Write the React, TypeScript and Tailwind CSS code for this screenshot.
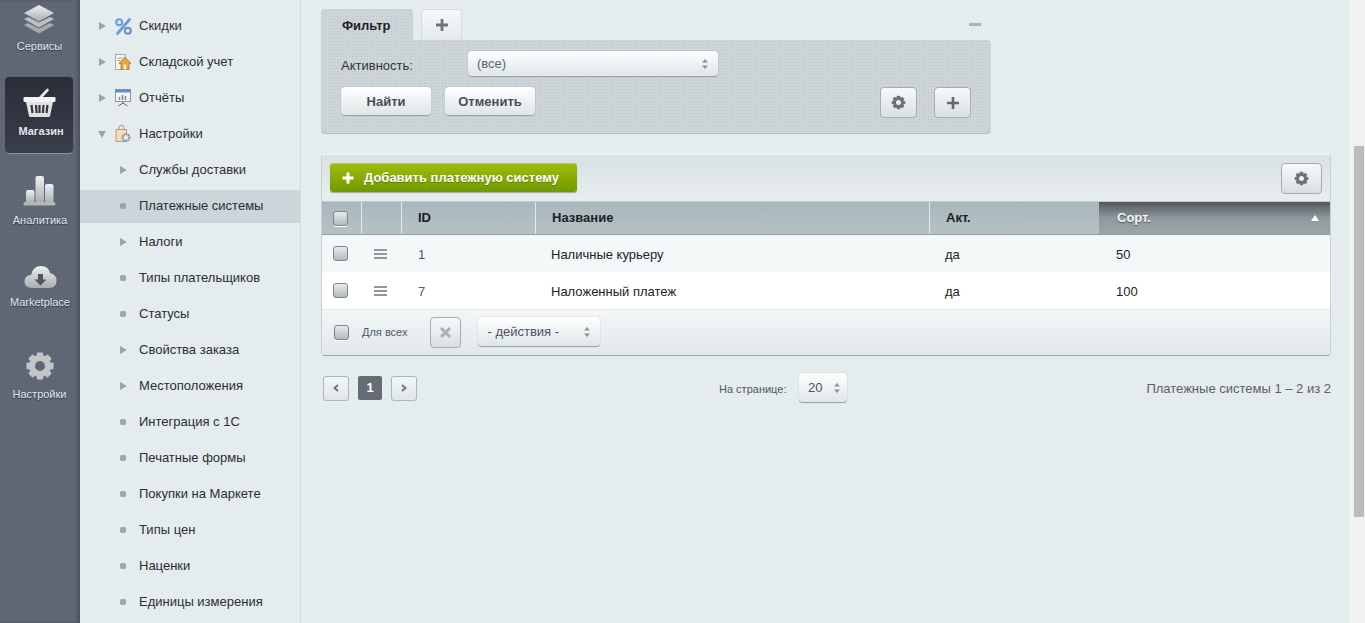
import React from 'react';

const Gear: React.FC<{ size: number; ring?: number; fill: string; className?: string }> = ({ size, ring = 4.6, fill, className }) => (
  <svg width={size} height={size} viewBox="0 0 32 32" className={className}>
    {[0, 45, 90, 135, 180, 225, 270, 315].map((a) => (
      <rect key={a} x="12.6" y="1.5" width="6.8" height="8" rx="1" fill={fill} transform={`rotate(${a} 16 16)`} />
    ))}
    <circle cx="16" cy="16" r="8.6" fill="none" stroke={fill} strokeWidth={ring * 1.4} />
  </svg>
);

const Defs = () => (
  <svg width="0" height="0" className="absolute">
    <defs>
      <linearGradient id="railg" x1="0" y1="0" x2="0" y2="1">
        <stop offset="0" stopColor="#eef0f1" />
        <stop offset="1" stopColor="#a9adb1" />
      </linearGradient>
    </defs>
  </svg>
);

const LayersIcon = () => (
  <svg width="32" height="29" viewBox="0 0 32 29">
    <path d="M1 20 L5 18 L16 23.5 L27 18 L31 20 L16 28.5Z" fill="#a6aaae" />
    <path d="M1 14 L5 12 L16 17.5 L27 12 L31 14 L16 22.5Z" fill="#bcc0c3" />
    <path d="M16 0 L31 8 L16 16.5 L1 8Z" fill="url(#railg)" />
  </svg>
);

const BasketIcon = () => (
  <svg width="33" height="29" viewBox="0 0 33 29">
    <path d="M17 10 L24.5 2" stroke="#e8e8e8" strokeWidth="2.6" strokeLinecap="round" />
    <rect x="0.5" y="9" width="32" height="5" rx="1" fill="#f2f2f2" />
    <path d="M3 14 H30 L27 28 Q26.8 29 25.5 29 H7.5 Q6.2 29 6 28Z" fill="#e0e2e3" />
    <path d="M8.5 17 L9.5 25 M13 17 L13.6 25 M16.5 17 V25 M20.5 17 L19.9 25 M24.5 17 L23.5 25" stroke="#33363f" strokeWidth="2.2" />
  </svg>
);

const BarsIcon = () => (
  <svg width="33" height="31" viewBox="0 0 33 31">
    <rect x="3" y="15" width="8.5" height="13" rx="2" fill="url(#railg)" />
    <rect x="12.5" y="1" width="8.5" height="27" rx="2" fill="url(#railg)" />
    <rect x="22" y="9" width="8.5" height="19" rx="2" fill="url(#railg)" />
    <rect x="0.5" y="27" width="32" height="3.5" rx="1.5" fill="#b5b8bb" />
  </svg>
);

const CloudIcon = () => (
  <svg width="33" height="24" viewBox="0 0 33 24">
    <path d="M8 23 Q0.5 23 0.5 16.5 Q0.5 10.5 7 10 Q9 1 17 1 Q24.5 1 26 8 Q32.5 9.5 32.5 15.5 Q32.5 23 25 23Z" fill="url(#railg)" />
    <path d="M14 9 H19 V14.5 H22.5 L16.5 20.5 L10.5 14.5 H14Z" fill="#51565f" />
  </svg>
);

const PercentIcon = () => (
  <svg width="17" height="17" viewBox="0 0 17 17">
    <path d="M14.5 1.5 L2.5 15.5" stroke="#6f9bd6" strokeWidth="2.8" strokeLinecap="round" />
    <circle cx="4.2" cy="4.2" r="3" fill="#dbe6f3" stroke="#6f9bd6" strokeWidth="2" />
    <circle cx="12.8" cy="12.8" r="3" fill="#dbe6f3" stroke="#6090cc" strokeWidth="2" />
  </svg>
);

const HouseIcon = () => (
  <svg width="16" height="16" viewBox="0 0 16 16">
    <rect x="0.5" y="0.5" width="10" height="15" fill="#f6f6f4" stroke="#a9a9a5" />
    <path d="M2.5 4 H7 M2.5 6.5 H5" stroke="#9d9d9a" />
    <path d="M4 9.5 L9.8 3 L16 9.5 H14 V15.5 H6 V9.5Z" fill="#e8a53a" stroke="#b26f16" strokeWidth="0.8" />
    <rect x="8.6" y="10.5" width="2.6" height="5" fill="#fff3d6" />
  </svg>
);

const ChartIcon = () => (
  <svg width="16" height="18" viewBox="0 0 16 18">
    <rect x="0.5" y="0.5" width="15" height="12" fill="#f5f5f5" stroke="#8d959e" />
    <rect x="0.5" y="0.5" width="15" height="3" fill="#5f8fd0" />
    <path d="M4.5 11 V8 M7.5 11 V6 M10.5 11 V7" stroke="#7d848b" strokeWidth="1.5" />
    <path d="M8 13 V15 M8 14 L3.5 17 M8 14 L12.5 17" stroke="#666" />
  </svg>
);

const BagIcon = () => (
  <svg width="16" height="18" viewBox="0 0 16 18">
    <path d="M4 5 V2.5 Q4 0.5 6.5 0.5 Q9 0.5 9 2.5 V5" fill="none" stroke="#b49060" />
    <path d="M1 4.5 H11.5 V16.5 H1Z" fill="#f5dcb6" stroke="#c09c6c" />
    <circle cx="11" cy="12.5" r="3.4" fill="#e4e6e8" stroke="#8a8f94" strokeWidth="2" strokeDasharray="1.6 0.6" />
    <circle cx="11" cy="12.5" r="1.2" fill="#f2f2f2" />
  </svg>
);

const Arrow: React.FC<{ open?: boolean }> = ({ open }) =>
  open ? (
    <span className="block w-0 h-0 border-l-[4.5px] border-r-[4.5px] border-t-[7px] border-l-transparent border-r-transparent border-t-[#9aa4ac] -ml-px" />
  ) : (
    <span className="block w-0 h-0 border-t-[4.5px] border-b-[4.5px] border-l-[7px] border-t-transparent border-b-transparent border-l-[#9aa4ac]" />
  );

const topItems = [
  { label: 'Скидки', icon: <PercentIcon /> },
  { label: 'Складской учет', icon: <HouseIcon /> },
  { label: 'Отчёты', icon: <ChartIcon /> },
  { label: 'Настройки', icon: <BagIcon />, open: true },
];

const subItems = [
  { label: 'Службы доставки', arrow: true },
  { label: 'Платежные системы', active: true },
  { label: 'Налоги', arrow: true },
  { label: 'Типы плательщиков' },
  { label: 'Статусы' },
  { label: 'Свойства заказа', arrow: true },
  { label: 'Местоположения', arrow: true },
  { label: 'Интеграция с 1С' },
  { label: 'Печатные формы' },
  { label: 'Покупки на Маркете' },
  { label: 'Типы цен' },
  { label: 'Наценки' },
  { label: 'Единицы измерения' },
];

const railLabel = 'text-[11px] leading-[14px] text-[#e4e9ee] [text-shadow:0_1px_1px_#2c303a]';
const whiteBtn =
  'bg-gradient-to-b from-white to-[#dfe6e8] rounded-[4px] border-b border-[#9ba5a9] shadow-[0_0_1px_rgba(80,90,95,0.55)]';
const outlineBtn =
  'bg-gradient-to-b from-[#f7f9f9] to-[#d9e0e2] rounded-[4px] border border-[#a4adb1] flex items-center justify-center';

const Check: React.FC = () => (
  <span className="block w-[15px] h-[15px] rounded-[3px] border border-[#7d868b] bg-gradient-to-b from-[#e9ebec] to-[#b4b9bc] shadow-[0_1px_0_#fff]" />
);

const Updown = () => (
  <svg width="6" height="10" viewBox="0 0 6 10">
    <path d="M3 0 L6 3.5 H0Z M3 10 L6 6.5 H0Z" fill="#8b9397" />
  </svg>
);

const GRID = 'grid grid-cols-[40px_40px_134px_394px_169px_1fr]';

const App: React.FC = () => (
  <div className="flex w-[1365px] h-[623px] overflow-hidden font-['Liberation_Sans',Arial,sans-serif] text-[13px] text-[#2a2e35]">
    <Defs />
    {/* left rail */}
    <aside className="w-[80px] shrink-0 flex flex-col items-center bg-[#606775] bg-[radial-gradient(#585f6c_1px,transparent_1px)] bg-[size:3px_3px] shadow-[inset_-3px_0_3px_rgba(0,0,0,0.18)]">
      <div className="h-[77px] w-full flex flex-col items-center pt-[5px] pr-[2px]">
        <LayersIcon />
        <span className={`${railLabel} mt-[5px] pl-[1px]`}>Сервисы</span>
      </div>
      <div className="w-[68px] h-[77px] mr-[2px] shrink-0 rounded-[4px] bg-gradient-to-b from-[#2b2e39] to-[#3a3e4a] border-b border-[#8f95a0] flex flex-col items-center pt-[11px] pl-[1px]">
        <BasketIcon />
        <span className={`${railLabel} mt-[7px] pl-[3px] font-bold text-[#dbe6f2] text-[10px]`}>Магазин</span>
      </div>
      <div className="h-[87px] w-full flex flex-col items-center pt-[21px] pr-[2px] shrink-0">
        <BarsIcon />
        <span className={`${railLabel} mt-[7px] pl-[2px]`}>Аналитика</span>
      </div>
      <div className="h-[88px] w-full flex flex-col items-center pt-[24px] shrink-0">
        <CloudIcon />
        <span className={`${railLabel} mt-[6px]`}>Marketplace</span>
      </div>
      <div className="w-full flex flex-col items-center pt-[22px] pr-[1px] shrink-0">
        <Gear size={30} fill="#c2c5c8" />
        <span className={`${railLabel} mt-[6px]`}>Настройки</span>
      </div>
    </aside>

    {/* tree menu */}
    <nav className="w-[221px] shrink-0 pt-[10px] bg-[#e5eced] border-r border-[#d3dadc]">
      {topItems.map((it) => (
        <div key={it.label} className="h-[33px] mb-[3px] pb-[1px] flex items-center pl-[19px]">
          <span className="w-[16px] shrink-0">
            <Arrow open={it.open} />
          </span>
          <span className="w-[24px] shrink-0 flex items-center">{it.icon}</span>
          <span>{it.label}</span>
        </div>
      ))}
      {subItems.map((it) => (
        <div
          key={it.label}
          className={`h-[33px] mb-[3px] pb-[1px] flex items-center pl-[40px] ${it.active ? 'bg-[#ccd6da]' : ''}`}
        >
          <span className="w-[19px] shrink-0">
            {it.arrow ? <Arrow /> : <span className="block w-[6px] h-[6px] rounded-[2px] bg-[#9ca5ae]" />}
          </span>
          <span>{it.label}</span>
        </div>
      ))}
    </nav>

    {/* content */}
    <main className="flex-1 bg-[#e5eced] pt-[9px] pl-[20px] pr-[17px]">
      <div className="w-[670px]">
        <div className="flex items-end h-[31px]">
          <div className="w-[92px] h-[31px] rounded-t-[4px] bg-[#cdd5d8] bg-[radial-gradient(#bcc5c9_1px,transparent_1px)] bg-[size:3px_3px] font-bold text-[#1e2226] pl-[21px] pt-[9px] leading-[16px]">
            Фильтр
          </div>
          <div className="w-[41px] h-[31px] ml-[8px] rounded-t-[4px] bg-gradient-to-b from-[#f7f9f9] to-[#e3e9eb] border-t border-x border-[#d5dcde] flex items-center justify-center">
            <svg width="14" height="14" viewBox="0 0 14 14">
              <path d="M7 1 V13 M1 7 H13" stroke="#6d767c" strokeWidth="2.8" />
            </svg>
          </div>
          <span className="ml-auto mr-[10px] mb-[14px] block w-[12px] h-[3px] bg-[#aab3b8]" />
        </div>
        <div className="h-[94px] rounded-b-[4px] rounded-tr-[4px] border-b border-[#b3bcc0] bg-[#cdd5d8] bg-[radial-gradient(#bcc5c9_1px,transparent_1px)] bg-[size:3px_3px] pl-[20px] pr-[20px] pt-[11px]">
          <div className="flex items-center h-[26px]">
            <span className="w-[127px] text-[#30353b] pt-[4px]">Активность:</span>
            <div className={`${whiteBtn} w-[250px] h-[26px] flex items-center pl-[9px] pr-[10px] text-[#5a6270]`}>
              <span className="pt-[1px]">(все)</span>
              <span className="ml-auto">
                <Updown />
              </span>
            </div>
          </div>
          <div className="flex mt-[10px]">
            <button className={`${whiteBtn} w-[90px] h-[29px] pt-[2px] font-bold text-[#46505c]`}>Найти</button>
            <button className={`${whiteBtn} w-[90px] h-[29px] pt-[2px] ml-[14px] font-bold text-[#46505c]`}>Отменить</button>
            <div className={`${outlineBtn} w-[37px] h-[31px] ml-auto`}>
              <Gear size={15} fill="#6b7378" />
            </div>
            <div className={`${outlineBtn} w-[37px] h-[31px] ml-[17px]`}>
              <svg width="14" height="14" viewBox="0 0 14 14">
                <path d="M7 1 V13 M1 7 H13" stroke="#5f686e" strokeWidth="2.6" />
              </svg>
            </div>
          </div>
        </div>
      </div>

      {/* grid card */}
      <div className="mt-[20px] rounded-[4px] overflow-hidden border-x border-t border-b border-t-[#f4f7f8] border-x-[#c9d1d4] border-b-[#9aa3a7]">
        <div className="h-[47px] bg-gradient-to-b from-[#d9e1e3] to-[#e8eef0] flex items-start pt-[8px] pl-[8px] pr-[8px] border-b border-[#c3ccd0]">
          <button className="w-[247px] h-[29px] rounded-[3px] bg-gradient-to-b from-[#9fbb0c] to-[#6f9a00] border-t border-[#bfd32a] shadow-[0_1px_1px_rgba(60,70,20,0.4)] flex items-center pl-[12px] text-white font-bold [text-shadow:0_1px_0_#5a7a00]">
            <svg width="12" height="12" viewBox="0 0 12 12">
              <path d="M6 0.5 V11.5 M0.5 6 H11.5" stroke="#fff" strokeWidth="3" />
            </svg>
            <span className="ml-[10px]">Добавить платежную систему</span>
          </button>
          <div className={`${outlineBtn} w-[41px] h-[31px] ml-auto`}>
            <Gear size={15} fill="#6b7378" />
          </div>
        </div>

        <div className={`${GRID} h-[33px] font-bold text-[#1b1f24] bg-gradient-to-b from-[#a9b6bb] to-[#b5c1c5] border-b border-[#939ea3]`}>
          <div className="flex items-center pl-[11px] border-r border-[#e4eaec]">
            <Check />
          </div>
          <div className="border-r border-[#e4eaec]" />
          <div className="flex items-center pl-[16px] border-r border-[#e4eaec]">ID</div>
          <div className="flex items-center pl-[16px] border-r border-[#e4eaec]">Название</div>
          <div className="flex items-center pl-[16px]">Акт.</div>
          <div className="flex items-center pl-[18px] pr-[11px] text-[#f2f5f6] bg-gradient-to-b from-[#53585e] via-[#8f999e] to-[#9aa5aa] [text-shadow:0_1px_1px_#4a5156]">
            Сорт.
            <span className="ml-auto block w-0 h-0 border-l-[4px] border-r-[4px] border-b-[6px] border-l-transparent border-r-transparent border-b-white" />
          </div>
        </div>

        {[
          { id: '1', name: 'Наличные курьеру', act: 'да', sort: '50', bg: 'bg-[#f4f8f9]', idc: 'text-[#4b5768]' },
          { id: '7', name: 'Наложенный платеж', act: 'да', sort: '100', bg: 'bg-white', idc: 'text-[#6c4a7c]' },
        ].map((r) => (
          <div key={r.id} className={`${GRID} h-[37px] ${r.bg} text-[#20242a]`}>
            <div className="flex items-center pl-[11px]">
              <Check />
            </div>
            <div className="flex items-center pl-[12px]">
              <svg width="13" height="10" viewBox="0 0 13 10">
                <path d="M0 1 H13 M0 5 H13 M0 9 H13" stroke="#90989d" strokeWidth="2" />
              </svg>
            </div>
            <div className={`flex items-center pl-[16px] pt-[3px] ${r.idc}`}>{r.id}</div>
            <div className="flex items-center pl-[15px] pt-[3px]">{r.name}</div>
            <div className="flex items-center pl-[15px] pt-[3px]">{r.act}</div>
            <div className="flex items-center pl-[17px] pt-[3px]">{r.sort}</div>
          </div>
        ))}

        <div className="h-[46px] bg-gradient-to-b from-[#f2f6f7] to-[#e2e9eb] border-t border-[#e4e9eb] flex items-center pl-[12px] pb-[1px]">
          <Check />
          <span className="ml-[13px] text-[11px] text-[#4f5766]">Для всех</span>
          <div className={`${outlineBtn} w-[31px] h-[31px] ml-[23px]`}>
            <svg width="11" height="11" viewBox="0 0 11 11">
              <path d="M1 1 L10 10 M10 1 L1 10" stroke="#a9b1b5" strokeWidth="3" />
            </svg>
          </div>
          <div className={`${whiteBtn} w-[122px] h-[30px] ml-[17px] flex items-center pl-[9px] pr-[10px] text-[#4a5260]`}>
            <span className="pt-[1px]">- действия -</span>
            <span className="ml-auto">
              <Updown />
            </span>
          </div>
        </div>
      </div>

      {/* pagination */}
      <div className="relative flex items-center h-[30px] mt-[17px] pl-[2px]">
        <div className="w-[26px] h-[25px] rounded-[3px] border border-[#a8b7c0] bg-gradient-to-b from-[#f3f6f7] to-[#e0e7e9] flex items-center justify-center">
          <svg width="6" height="8" viewBox="0 0 6 8">
            <path d="M5 1 L1.5 4 L5 7" fill="none" stroke="#69727a" strokeWidth="1.8" />
          </svg>
        </div>
        <div className="w-[24px] h-[24px] ml-[9px] rounded-[2px] bg-[#666c74] text-white font-bold flex items-center justify-center">
          1
        </div>
        <div className="w-[26px] h-[25px] ml-[9px] rounded-[3px] border border-[#a8b7c0] bg-gradient-to-b from-[#f3f6f7] to-[#e0e7e9] flex items-center justify-center">
          <svg width="6" height="8" viewBox="0 0 6 8">
            <path d="M1 1 L4.5 4 L1 7" fill="none" stroke="#69727a" strokeWidth="1.8" />
          </svg>
        </div>
        <span className="ml-[302px] w-[80px] pt-[2px] text-[11px] text-[#4f5766]">На странице:</span>
        <div className={`${whiteBtn} w-[48px] h-[30px] flex items-center pl-[9px] pr-[7px] text-[#4a5260]`}>
          <span className="pt-[1px]">20</span>
          <span className="ml-auto">
            <Updown />
          </span>
        </div>
        <span className="ml-auto pt-[2px] text-[#5a6064]">Платежные системы 1 – 2 из 2</span>
      </div>
    </main>

    {/* scrollbar */}
    <div className="w-[17px] shrink-0 bg-[#f1f1f1] border-l border-[#e3e5e6] pl-[5px]">
      <div className="w-[10px] h-[371px] mt-[146px] bg-[#bcbcbc]" />
    </div>
  </div>
);

export default App;
